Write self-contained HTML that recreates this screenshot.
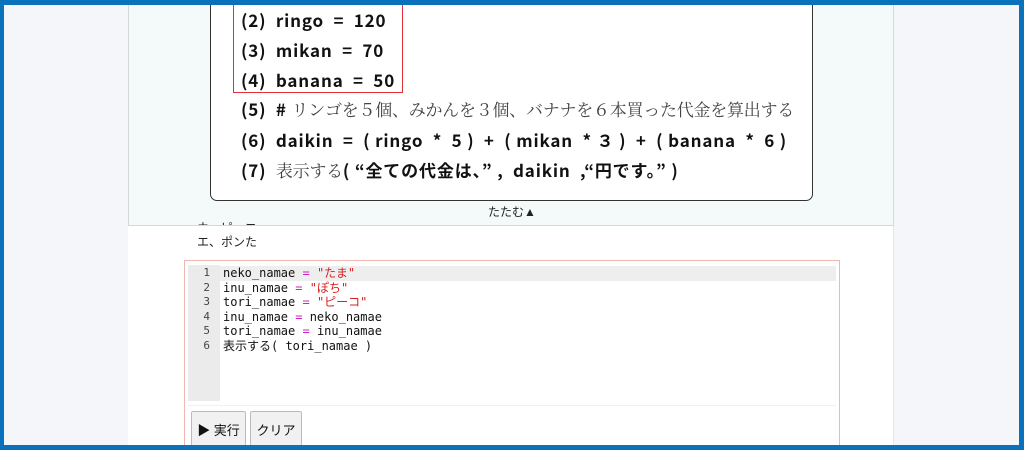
<!DOCTYPE html>
<html><head><meta charset="utf-8"><style>
*{margin:0;padding:0;box-sizing:border-box}
body{width:1024px;height:450px;overflow:hidden;background:#0a72bb;position:relative;font-family:"Liberation Sans","Noto Sans CJK JP",sans-serif}
#in{position:absolute;left:4px;top:5px;width:1015px;height:440px;background:#f4f6f9;overflow:hidden}
.abs{position:absolute}
#panel{left:124px;top:-5px;width:766px;height:460px;background:#fff;border-right:1px solid #e4e6e8}
#box{left:124px;top:-5px;width:766px;height:226px;background:#f4f9fa;border:1px solid #d4d8da;border-top:none}
#white{left:206px;top:-10px;width:603px;height:206px;background:#fff;border:1.5px solid #333;border-radius:0 0 7px 7px}
#red{left:229px;top:-2px;width:170px;height:90px;border:1.5px solid #e0303a}
.ln{position:absolute;left:237px;font-size:17px;line-height:20px;font-weight:bold;color:#111;white-space:nowrap;font-family:"Noto Sans CJK JP",sans-serif;letter-spacing:0.85px}
.n{font-weight:normal;color:#444;font-family:"Noto Serif CJK SC",serif;letter-spacing:-0.25px}
.tat{left:484px;top:198px;font-size:12px;color:#222}
.small{left:193px;font-size:12px;color:#222}
#ed{left:180px;top:255px;width:656px;height:200px;border:1px solid #efb7b0;background:#fff}
#gut{left:184px;top:260px;width:32px;height:136px;background:#ebebeb}
#act{left:216px;top:261px;width:616px;height:15px;background:#eeeeee}
.code{position:absolute;left:219px;font-family:"DejaVu Sans Mono","Noto Sans CJK JP",monospace;font-size:12px;color:#111;white-space:pre;line-height:14.6px}
.num{position:absolute;left:188px;width:18px;text-align:right;font-family:"DejaVu Sans Mono",monospace;font-size:11px;color:#444;line-height:14.6px}
.op{color:#d020c0}.s{color:#d82020}
#sep{left:184px;top:400px;width:648px;height:1px;background:#f0f0f0}
.btn{position:absolute;top:406px;height:36px;background:#f1f1f1;border:1px solid #bbb;border-radius:2px;font-size:13px;color:#111;display:flex;align-items:center;justify-content:center}
</style></head><body><div id="in">
<div class="abs" id="panel"></div>
<div class="abs" id="box"></div>
<div class="abs" id="white"></div>
<div class="abs" id="red"></div>
<div class="ln" style="top:5px">(2)&nbsp; ringo&nbsp; =&nbsp; 120</div>
<div class="ln" style="top:35px">(3)&nbsp; mikan&nbsp; =&nbsp; 70</div>
<div class="ln" style="top:65px">(4)&nbsp; banana&nbsp; =&nbsp; 50</div>
<div class="ln" style="top:94px">(5)&nbsp; # <span class="n">リンゴを５個、みかんを３個、バナナを６本買った代金を算出する</span></div>
<div class="ln" style="top:125px">(6)&nbsp; daikin&nbsp; =&nbsp; ( ringo&nbsp; *&nbsp; 5 )&nbsp; +&nbsp; ( mikan&nbsp; * ３ )&nbsp; +&nbsp; ( banana&nbsp; *&nbsp; 6 )</div>
<div class="ln" style="top:155px">(7)&nbsp; <span class="n">表示する</span>( “全ての代金は、” ,&nbsp; daikin&nbsp; ,“円です。”&nbsp;)</div>
<div class="abs tat">たたむ▲</div>
<div class="abs small" style="top:214px;height:6px;overflow:hidden">ウ、ピーコ</div>
<div class="abs small" style="top:228px">エ、ポンた</div>
<div class="abs" id="ed"></div>
<div class="abs" id="gut"></div>
<div class="abs" id="act"></div>
<div class="num" style="top:261px">1<br>2<br>3<br>4<br>5<br>6</div>
<div class="code" style="top:261px">neko_namae <span class="op">=</span> <span class="s">"たま"</span>
inu_namae <span class="op">=</span> <span class="s">"ぽち"</span>
tori_namae <span class="op">=</span> <span class="s">"ピーコ"</span>
inu_namae <span class="op">=</span> neko_namae
tori_namae <span class="op">=</span> inu_namae
表示する( tori_namae )</div>
<div class="abs" id="sep"></div>
<div class="btn" style="left:187px;width:55px">▶ 実行</div>
<div class="btn" style="left:246px;width:52px">クリア</div>
</div></body></html>
